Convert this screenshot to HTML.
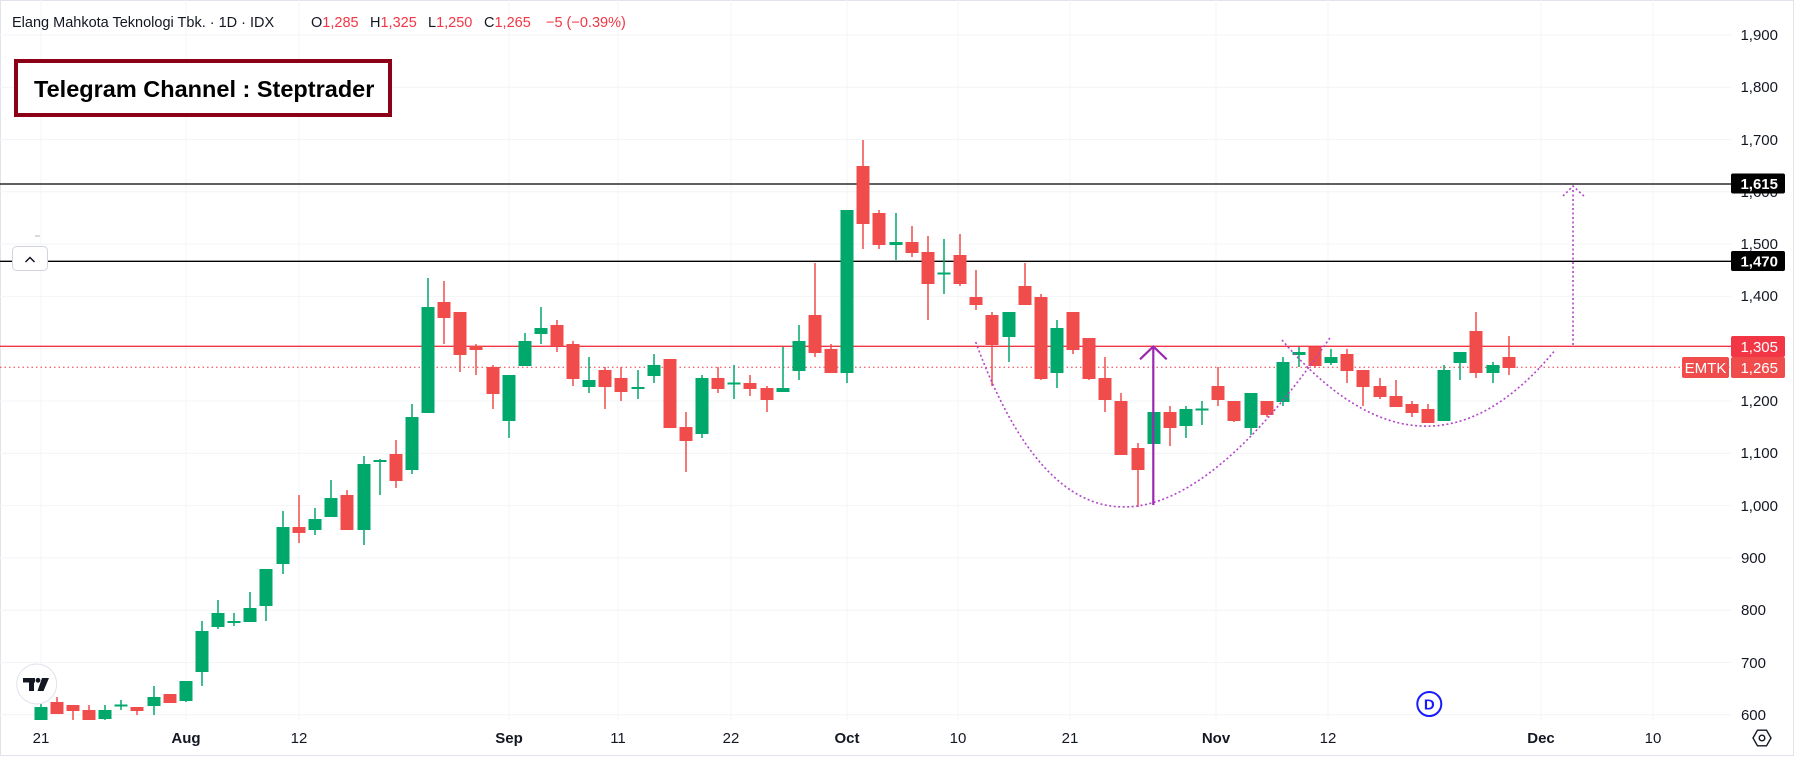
<!DOCTYPE html>
<html><head><meta charset="utf-8"><style>
html,body{margin:0;padding:0;background:#fff;}
body{width:1794px;height:758px;overflow:hidden;position:relative;font-family:"Liberation Sans",sans-serif;}
svg{position:absolute;left:0;top:0;}
</style></head><body>
<svg width="1794" height="758" viewBox="0 0 1794 758" xmlns="http://www.w3.org/2000/svg" font-family="Liberation Sans, sans-serif">
<rect x="0.5" y="0.5" width="1793" height="755" fill="#fff" stroke="#e0e3eb"/>
<g stroke="#f3f4f7" stroke-width="1">
<line x1="0" y1="34.9" x2="1731" y2="34.9"/><line x1="0" y1="87.2" x2="1731" y2="87.2"/><line x1="0" y1="139.5" x2="1731" y2="139.5"/><line x1="0" y1="191.8" x2="1731" y2="191.8"/><line x1="0" y1="244.1" x2="1731" y2="244.1"/><line x1="0" y1="296.4" x2="1731" y2="296.4"/><line x1="0" y1="348.7" x2="1731" y2="348.7"/><line x1="0" y1="401" x2="1731" y2="401"/><line x1="0" y1="453.3" x2="1731" y2="453.3"/><line x1="0" y1="505.6" x2="1731" y2="505.6"/><line x1="0" y1="557.9" x2="1731" y2="557.9"/><line x1="0" y1="610.2" x2="1731" y2="610.2"/><line x1="0" y1="662.5" x2="1731" y2="662.5"/><line x1="0" y1="714.8" x2="1731" y2="714.8"/>
<line x1="41" y1="0" x2="41" y2="720"/><line x1="186" y1="0" x2="186" y2="720"/><line x1="299" y1="0" x2="299" y2="720"/><line x1="509" y1="0" x2="509" y2="720"/><line x1="618" y1="0" x2="618" y2="720"/><line x1="731" y1="0" x2="731" y2="720"/><line x1="847" y1="0" x2="847" y2="720"/><line x1="958" y1="0" x2="958" y2="720"/><line x1="1070" y1="0" x2="1070" y2="720"/><line x1="1216" y1="0" x2="1216" y2="720"/><line x1="1328" y1="0" x2="1328" y2="720"/><line x1="1541" y1="0" x2="1541" y2="720"/><line x1="1653" y1="0" x2="1653" y2="720"/>
</g>
<line x1="0" y1="755.5" x2="1794" y2="755.5" stroke="#e0e3eb"/>
<line x1="0" y1="184" x2="1731" y2="184" stroke="#000" stroke-width="1.3"/>
<line x1="0" y1="261.3" x2="1731" y2="261.3" stroke="#000" stroke-width="1.3"/>
<line x1="0" y1="346.3" x2="1731" y2="346.3" stroke="#f23645" stroke-width="1.3"/>
<line x1="0" y1="367.3" x2="1731" y2="367.3" stroke="#f23645" stroke-width="1" stroke-dasharray="1.5 3"/>
<g id="c">
<g stroke="#00a86b" stroke-width="1.5">
<line x1="41" y1="704" x2="41" y2="720"/><line x1="105" y1="705" x2="105" y2="720"/><line x1="121" y1="700" x2="121" y2="710"/><line x1="154" y1="686" x2="154" y2="715"/><line x1="186" y1="681" x2="186" y2="702"/><line x1="202" y1="621" x2="202" y2="686"/><line x1="218" y1="600" x2="218" y2="629"/><line x1="234" y1="613" x2="234" y2="626"/><line x1="250" y1="592" x2="250" y2="622"/><line x1="266" y1="569" x2="266" y2="621"/><line x1="283" y1="511" x2="283" y2="574"/><line x1="315" y1="508" x2="315" y2="535"/><line x1="331" y1="480" x2="331" y2="517"/><line x1="364" y1="456" x2="364" y2="545"/><line x1="380" y1="459" x2="380" y2="495"/><line x1="412" y1="404" x2="412" y2="474"/><line x1="428" y1="278" x2="428" y2="413"/><line x1="509" y1="375" x2="509" y2="438"/><line x1="525" y1="333" x2="525" y2="366"/><line x1="541" y1="307" x2="541" y2="344"/><line x1="589" y1="357" x2="589" y2="393"/><line x1="638" y1="370" x2="638" y2="399"/><line x1="654" y1="354" x2="654" y2="383"/><line x1="702" y1="375" x2="702" y2="438"/><line x1="734" y1="365" x2="734" y2="399"/><line x1="783" y1="347" x2="783" y2="392"/><line x1="799" y1="325" x2="799" y2="380"/><line x1="847" y1="210" x2="847" y2="383"/><line x1="896" y1="213" x2="896" y2="260"/><line x1="944" y1="239" x2="944" y2="294"/><line x1="1009" y1="312" x2="1009" y2="362"/><line x1="1057" y1="320" x2="1057" y2="388"/><line x1="1154" y1="412" x2="1154" y2="444"/><line x1="1186" y1="406" x2="1186" y2="438"/><line x1="1202" y1="401" x2="1202" y2="425"/><line x1="1251" y1="393" x2="1251" y2="435"/><line x1="1283" y1="357" x2="1283" y2="406"/><line x1="1299" y1="347" x2="1299" y2="367"/><line x1="1331" y1="349" x2="1331" y2="365"/><line x1="1444" y1="365" x2="1444" y2="421"/><line x1="1460" y1="352" x2="1460" y2="380"/><line x1="1493" y1="362" x2="1493" y2="383"/>
</g>
<g fill="#00a86b">
<rect x="34.5" y="707" width="13" height="13"/><rect x="98.5" y="710" width="13" height="9"/><rect x="114.5" y="704.5" width="13" height="2"/><rect x="147.5" y="697" width="13" height="9"/><rect x="179.5" y="681" width="13" height="20"/><rect x="195.5" y="631" width="13" height="41"/><rect x="211.5" y="613" width="13" height="14"/><rect x="227.5" y="621" width="13" height="2"/><rect x="243.5" y="608" width="13" height="14"/><rect x="259.5" y="569" width="13" height="37"/><rect x="276.5" y="527" width="13" height="37"/><rect x="308.5" y="519" width="13" height="11"/><rect x="324.5" y="498" width="13" height="19"/><rect x="357.5" y="464" width="13" height="66"/><rect x="373.5" y="460" width="13" height="2"/><rect x="405.5" y="417" width="13" height="53"/><rect x="421.5" y="307" width="13" height="106"/><rect x="502.5" y="375" width="13" height="46"/><rect x="518.5" y="341" width="13" height="25"/><rect x="534.5" y="328" width="13" height="6"/><rect x="582.5" y="380" width="13" height="7"/><rect x="631.5" y="387" width="13" height="2"/><rect x="647.5" y="365" width="13" height="11"/><rect x="695.5" y="378" width="13" height="56"/><rect x="727.5" y="382.5" width="13" height="2"/><rect x="776.5" y="388" width="13" height="4"/><rect x="792.5" y="341" width="13" height="30"/><rect x="840.5" y="210" width="13" height="163"/><rect x="889.5" y="242" width="13" height="3"/><rect x="937.5" y="272.5" width="13" height="2"/><rect x="1002.5" y="312" width="13" height="25"/><rect x="1050.5" y="328" width="13" height="45"/><rect x="1147.5" y="412" width="13" height="32"/><rect x="1179.5" y="409" width="13" height="17"/><rect x="1195.5" y="408.5" width="13" height="2"/><rect x="1244.5" y="393" width="13" height="35"/><rect x="1276.5" y="362" width="13" height="40"/><rect x="1292.5" y="352" width="13" height="3"/><rect x="1324.5" y="357" width="13" height="6"/><rect x="1437.5" y="370" width="13" height="51"/><rect x="1453.5" y="352" width="13" height="11"/><rect x="1486.5" y="365" width="13" height="8"/>
</g>
<g stroke="#f04c4c" stroke-width="1.5">
<line x1="57" y1="697" x2="57" y2="714"/><line x1="73" y1="705" x2="73" y2="720"/><line x1="89" y1="705" x2="89" y2="720"/><line x1="137" y1="707" x2="137" y2="715"/><line x1="299" y1="495" x2="299" y2="543"/><line x1="347" y1="490" x2="347" y2="530"/><line x1="396" y1="440" x2="396" y2="488"/><line x1="444" y1="281" x2="444" y2="344"/><line x1="460" y1="312" x2="460" y2="372"/><line x1="476" y1="344" x2="476" y2="375"/><line x1="493" y1="365" x2="493" y2="409"/><line x1="557" y1="320" x2="557" y2="352"/><line x1="573" y1="341" x2="573" y2="386"/><line x1="605" y1="367" x2="605" y2="409"/><line x1="621" y1="367" x2="621" y2="401"/><line x1="686" y1="412" x2="686" y2="472"/><line x1="718" y1="367" x2="718" y2="393"/><line x1="750" y1="375" x2="750" y2="396"/><line x1="767" y1="386" x2="767" y2="412"/><line x1="815" y1="263" x2="815" y2="357"/><line x1="831" y1="344" x2="831" y2="373"/><line x1="863" y1="140" x2="863" y2="249"/><line x1="879" y1="210" x2="879" y2="249"/><line x1="912" y1="226" x2="912" y2="257"/><line x1="928" y1="236" x2="928" y2="320"/><line x1="960" y1="234" x2="960" y2="286"/><line x1="976" y1="270" x2="976" y2="310"/><line x1="992" y1="312" x2="992" y2="386"/><line x1="1025" y1="263" x2="1025" y2="305"/><line x1="1041" y1="294" x2="1041" y2="380"/><line x1="1073" y1="312" x2="1073" y2="354"/><line x1="1089" y1="338" x2="1089" y2="380"/><line x1="1105" y1="357" x2="1105" y2="412"/><line x1="1121" y1="393" x2="1121" y2="455"/><line x1="1138" y1="443" x2="1138" y2="507"/><line x1="1170" y1="406" x2="1170" y2="446"/><line x1="1218" y1="367" x2="1218" y2="406"/><line x1="1234" y1="401" x2="1234" y2="422"/><line x1="1267" y1="401" x2="1267" y2="417"/><line x1="1315" y1="347" x2="1315" y2="368"/><line x1="1347" y1="349" x2="1347" y2="383"/><line x1="1363" y1="370" x2="1363" y2="406"/><line x1="1380" y1="378" x2="1380" y2="399"/><line x1="1396" y1="380" x2="1396" y2="407"/><line x1="1412" y1="401" x2="1412" y2="417"/><line x1="1428" y1="404" x2="1428" y2="423"/><line x1="1476" y1="312" x2="1476" y2="378"/><line x1="1509" y1="336" x2="1509" y2="375"/>
</g>
<g fill="#f04c4c">
<rect x="50.5" y="702" width="13" height="12"/><rect x="66.5" y="705" width="13" height="6"/><rect x="82.5" y="710" width="13" height="10"/><rect x="130.5" y="707" width="13" height="4"/><rect x="163.5" y="694" width="13" height="9"/><rect x="292.5" y="527" width="13" height="6"/><rect x="340.5" y="495" width="13" height="35"/><rect x="389.5" y="454" width="13" height="27"/><rect x="437.5" y="302" width="13" height="16"/><rect x="453.5" y="312" width="13" height="43"/><rect x="469.5" y="346" width="13" height="4"/><rect x="486.5" y="367" width="13" height="27"/><rect x="550.5" y="325" width="13" height="21"/><rect x="566.5" y="344" width="13" height="35"/><rect x="598.5" y="370" width="13" height="17"/><rect x="614.5" y="378" width="13" height="14"/><rect x="663.5" y="359" width="13" height="69"/><rect x="679.5" y="427" width="13" height="14"/><rect x="711.5" y="378" width="13" height="11"/><rect x="743.5" y="383" width="13" height="6"/><rect x="760.5" y="388" width="13" height="12"/><rect x="808.5" y="315" width="13" height="38"/><rect x="824.5" y="349" width="13" height="24"/><rect x="856.5" y="166" width="13" height="58"/><rect x="872.5" y="213" width="13" height="32"/><rect x="905.5" y="242" width="13" height="11"/><rect x="921.5" y="252" width="13" height="32"/><rect x="953.5" y="255" width="13" height="29"/><rect x="969.5" y="297" width="13" height="8"/><rect x="985.5" y="315" width="13" height="30"/><rect x="1018.5" y="286" width="13" height="19"/><rect x="1034.5" y="297" width="13" height="82"/><rect x="1066.5" y="312" width="13" height="38"/><rect x="1082.5" y="338" width="13" height="41"/><rect x="1098.5" y="378" width="13" height="22"/><rect x="1114.5" y="401" width="13" height="54"/><rect x="1131.5" y="448" width="13" height="22"/><rect x="1163.5" y="412" width="13" height="16"/><rect x="1211.5" y="386" width="13" height="14"/><rect x="1227.5" y="401" width="13" height="20"/><rect x="1260.5" y="401" width="13" height="14"/><rect x="1308.5" y="347" width="13" height="19"/><rect x="1340.5" y="354" width="13" height="17"/><rect x="1356.5" y="370" width="13" height="17"/><rect x="1373.5" y="386" width="13" height="11"/><rect x="1389.5" y="396" width="13" height="11"/><rect x="1405.5" y="404" width="13" height="9"/><rect x="1421.5" y="409" width="13" height="14"/><rect x="1469.5" y="331" width="13" height="42"/><rect x="1502.5" y="357" width="13" height="11"/>
</g>
</g>
<g fill="none" stroke="#b144c8" stroke-width="1.6" stroke-dasharray="2 2.5">
<path d="M975.7 342 Q1097.5 674.5 1330.7 336.7"/>
<path d="M1282 340 Q1425.5 507 1555 350.3"/>
<path d="M1573 345 L1573 188"/>
<path d="M1563 196 L1573 186 L1585 197"/>
</g>
<g fill="none" stroke="#9c27b0" stroke-width="2.2">
<line x1="1153.3" y1="347" x2="1153.3" y2="505"/>
<path d="M1140 359.3 L1153.3 346.5 L1166.7 359.3"/>
</g>
<g font-size="15" fill="#131722" text-anchor="end">
<text x="1778" y="40">1,900</text><text x="1778" y="92">1,800</text><text x="1778" y="145">1,700</text><text x="1778" y="197">1,600</text><text x="1778" y="249">1,500</text><text x="1778" y="301">1,400</text><text x="1778" y="406">1,200</text><text x="1778" y="458">1,100</text><text x="1778" y="511">1,000</text><text x="1766" y="563">900</text><text x="1766" y="615">800</text><text x="1766" y="668">700</text><text x="1766" y="720">600</text>
</g>
<rect x="1731" y="173.5" width="54" height="20" rx="2" fill="#000"/>
<text x="1778" y="189" font-size="15" font-weight="bold" fill="#fff" text-anchor="end">1,615</text>
<rect x="1731" y="251" width="54" height="20" rx="2" fill="#000"/>
<text x="1778" y="266.5" font-size="15" font-weight="bold" fill="#fff" text-anchor="end">1,470</text>
<rect x="1731" y="336" width="54" height="21" rx="2" fill="#f23645"/>
<text x="1778" y="352" font-size="15" fill="#fff" text-anchor="end">1,305</text>
<rect x="1731" y="357" width="54" height="21" rx="2" fill="#f04c4c"/>
<text x="1778" y="373" font-size="15" fill="#fff" text-anchor="end">1,265</text>
<rect x="1682" y="357" width="47" height="21" rx="2" fill="#f04c4c"/>
<text x="1705.5" y="373" font-size="15" fill="#fff" text-anchor="middle">EMTK</text>
<g font-size="15" fill="#131722" text-anchor="middle">
<text x="41" y="743">21</text><text x="186" y="743" font-weight="bold">Aug</text><text x="299" y="743">12</text><text x="509" y="743" font-weight="bold">Sep</text><text x="618" y="743">11</text><text x="731" y="743">22</text><text x="847" y="743" font-weight="bold">Oct</text><text x="958" y="743">10</text><text x="1070" y="743">21</text><text x="1216" y="743" font-weight="bold">Nov</text><text x="1328" y="743">12</text><text x="1541" y="743" font-weight="bold">Dec</text><text x="1653" y="743">10</text>
</g>
<g transform="translate(1762,738)" fill="none" stroke="#131722" stroke-width="1.4">
<path d="M-9 0 L-4.5 -7.8 L4.5 -7.8 L9 0 L4.5 7.8 L-4.5 7.8 Z"/>
<circle r="2.8"/>
</g>
<circle cx="1429.3" cy="704" r="12" fill="#fff" stroke="#1a1aff" stroke-width="2"/>
<text x="1429.3" y="709.5" font-size="15" font-weight="bold" fill="#1a1aff" text-anchor="middle">D</text>
<circle cx="36.7" cy="684" r="20" fill="#fff" stroke="#e0e3eb" stroke-width="1"/>
<g fill="#131722">
<rect x="23" y="678" width="12" height="4.5"/><rect x="29" y="678" width="5" height="13"/>
<circle cx="38" cy="680.3" r="2.4"/>
<path d="M42 678 L49 678 L43.5 691 L37.5 691 Z"/>
</g>
<rect x="12.5" y="246.5" width="35" height="24" rx="4" fill="#fff" stroke="#d1d4dc"/>
<path d="M25.5 262 L30 257.5 L34.5 262" fill="none" stroke="#131722" stroke-width="1.5"/>
<line x1="35" y1="236" x2="40" y2="236" stroke="#b2b5be"/>
<text x="12" y="27" font-size="14.5" fill="#131722">Elang Mahkota Teknologi Tbk. · 1D · IDX</text>
<text x="311" y="27" font-size="14.5" fill="#131722">O<tspan fill="#f23645">1,285</tspan></text>
<text x="370" y="27" font-size="14.5" fill="#131722">H<tspan fill="#f23645">1,325</tspan></text>
<text x="428" y="27" font-size="14.5" fill="#131722">L<tspan fill="#f23645">1,250</tspan></text>
<text x="484" y="27" font-size="14.5" fill="#131722">C<tspan fill="#f23645">1,265</tspan></text>
<text x="546" y="27" font-size="14.5" fill="#f23645">−5 (−0.39%)</text>
<rect x="16" y="61" width="374" height="54" fill="#fff" stroke="#8b0016" stroke-width="4"/>
<text x="34" y="97" font-size="23.5" font-weight="bold" fill="#000">Telegram Channel : Steptrader</text>
</svg>
</body></html>
